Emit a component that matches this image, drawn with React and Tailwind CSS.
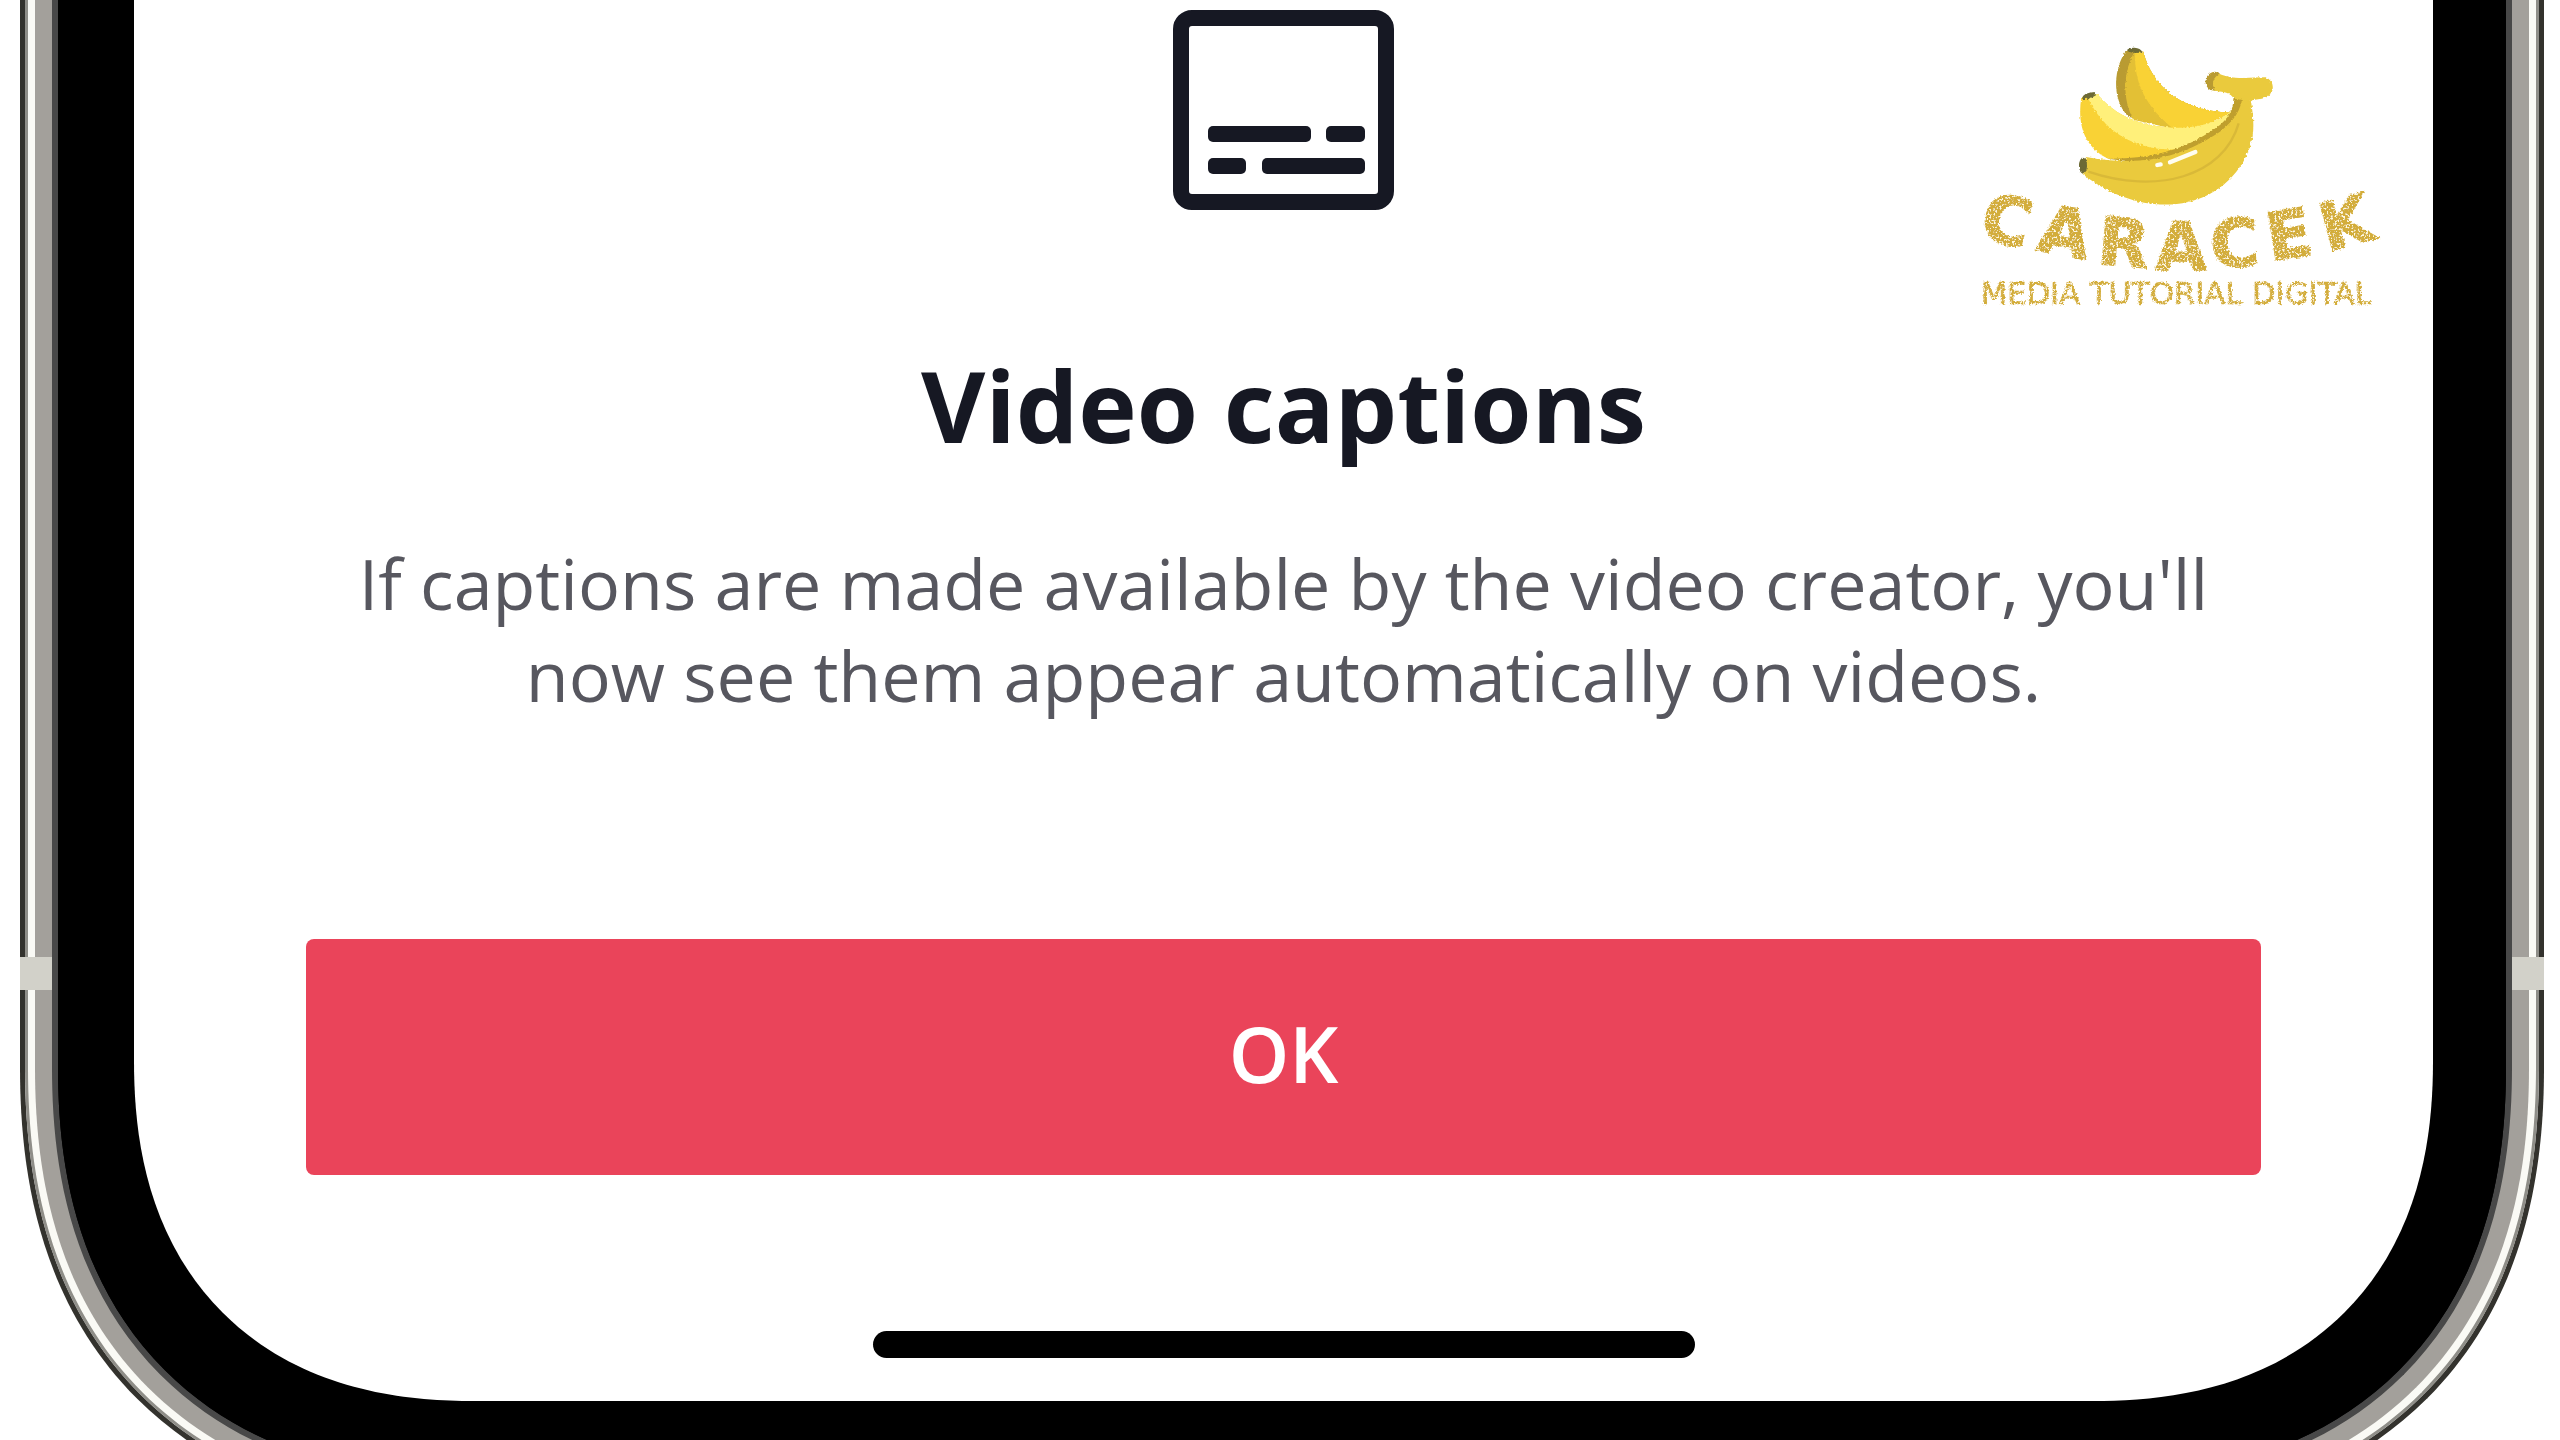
const GOLD = '#d3ad3a'

function CaptionsIcon() {
  return (
    <svg viewBox="0 0 221 200" className="h-[200px] w-[221px] shrink-0" fill="#161823" aria-hidden="true">
      <rect x="8" y="8" width="205" height="184" rx="11" fill="none" stroke="#161823" strokeWidth="16" />
      <rect x="35" y="116" width="103" height="16" rx="5" />
      <rect x="153" y="116" width="39" height="16" rx="5" />
      <rect x="35" y="148" width="38" height="16" rx="5" />
      <rect x="89" y="148" width="103" height="16" rx="5" />
    </svg>
  )
}

function BrandLogo() {
  return (
    <svg viewBox="0 0 1320 900" className="h-[300px] w-[440px]" role="img" aria-label="Caracek Media Tutorial Digital">
      <defs>
        {/* gold glitter for the lettering */}
        <filter id="glitter" x="-5%" y="-10%" width="110%" height="120%">
          <feTurbulence type="fractalNoise" baseFrequency="0.16" numOctaves="2" seed="4" result="noise" />
          <feDisplacementMap in="SourceGraphic" in2="noise" scale="14" xChannelSelector="R" yChannelSelector="G" result="rough" />
          <feColorMatrix in="noise" type="matrix" values="0 0 0 0 1  0 0 0 0 0.95  0 0 0 0 0.75  7 0 0 0 -3.8" result="specks" />
          <feComposite in="specks" in2="rough" operator="in" result="shine" />
          <feMerge>
            <feMergeNode in="rough" />
            <feMergeNode in="shine" />
          </feMerge>
        </filter>
        <filter id="fuzz" x="-5%" y="-5%" width="110%" height="110%">
          <feTurbulence type="fractalNoise" baseFrequency="0.16" numOctaves="1" seed="2" />
          <feDisplacementMap in="SourceGraphic" scale="10" xChannelSelector="R" yChannelSelector="G" />
        </filter>
      </defs>

      <g filter="url(#fuzz)">
        {/* back banana */}
        <path d="M500 90C462 140 452 235 505 290L640 325L720 320L812 278C650 272 575 190 550 95Z" fill="#b99b30" />
        <path d="M524 95C490 150 485 240 522 300L640 326L720 320L812 278C650 272 575 190 550 95Z" fill="#e3c036" />
        <path d="M526 95C520 190 560 262 640 326L720 322L812 278C650 272 575 190 550 95Z" fill="#f9d235" />
        <path d="M499 92Q506 82 524 83Q541 84 547 96Q524 103 499 92Z" fill="#6d6b36" />

        {/* middle banana */}
        <path d="M364 232C350 320 378 385 445 416C600 425 740 380 822 268C760 318 690 328 620 322C520 312 460 280 410 220Z" fill="#f9d235" />
        <path d="M385 236C430 330 520 395 660 388C730 365 790 330 822 268C760 318 690 328 620 322C520 312 460 280 410 220Z" fill="#fff07a" />
        <path d="M366 236Q368 218 404 216L408 226Q388 240 366 236Z" fill="#6d6b36" />

        {/* front banana and stem */}
        <path d="M440 416C600 418 700 375 780 315C815 285 820 260 820 235L850 235L845 300L700 410L560 430Z" fill="#bf9f2d" />
        <path d="M378 411C540 440 660 415 780 335C825 300 843 270 846 232L872 238C888 330 880 370 850 425C750 590 530 590 368 462Z" fill="#eaca3d" />
        <path d="M765 155C815 182 865 172 915 172C950 182 945 232 905 236C890 238 880 240 868 242L822 236C805 212 785 218 755 210C730 196 735 160 765 155Z" fill="#eaca3d" />
        <path d="M765 155C730 160 730 198 752 210L768 212C752 196 758 172 780 160Z" fill="#b99b30" />
        <ellipse cx="369" cy="437" rx="12" ry="24" fill="#6d6b36" />
      </g>
      <path d="M385 455C590 525 790 470 836 310" fill="none" stroke="#d9b938" strokeWidth="7" />
      <path d="M630 427L706 396M592 435L602 433" fill="none" stroke="#fffdf0" strokeWidth="13" strokeLinecap="round" />

      <g filter="url(#glitter)" fill={GOLD} stroke={GOLD} fontFamily="'DejaVu Sans', 'Open Sans', sans-serif">
        <text
          x="52 226 408 585 754 930 1100"
          y="652 690 731 749 744 724 696"
          rotate="14 11 5 0 -3 -9 -15"
          fontSize="200"
          fontWeight="700"
          strokeWidth="4"
        >
          CARACEK
        </text>
        <text x="62" y="853" fontSize="92" strokeWidth="2">MEDIA TUTORIAL DIGITAL</text>
      </g>
    </svg>
  )
}

// Lower half of the handset, one ring per layer of the metal edge
function PhoneFrame({ children }) {
  return (
    <div className="relative ml-5 mr-4">
      <div className="rounded-b-[448px] [corner-shape:superellipse(1.2)] border-x-[5px] border-b-[5px] border-[#33322d]">
        <div className="rounded-b-[443px] [corner-shape:superellipse(1.2)] border-x-[3px] border-b-[3px] border-[#8f8e88] bg-[#8f8e88]">
          <div className="rounded-b-[440px] [corner-shape:superellipse(1.2)] border-x-[7px] border-b-[7px] border-[#fafaf5] bg-[#fafaf5]">
            <div className="rounded-b-[433px] [corner-shape:superellipse(1.2)] border-x-[17px] border-b-[17px] border-[#a3a09b] bg-[#a3a09b]">
              <div className="rounded-b-[416px] [corner-shape:superellipse(1.2)] border-x-[6px] border-b-[6px] border-[#484848] bg-black">
                <div className="rounded-b-[410px] [corner-shape:superellipse(1.2)] bg-black pb-[76px] pl-[76px] pr-[73px]">
                  {children}
                </div>
              </div>
            </div>
          </div>
        </div>
      </div>
      {/* antenna bands */}
      <span className="absolute left-0 top-[957px] h-[33px] w-8 bg-[#d2d1c9]" />
      <span className="absolute right-0 top-[957px] h-[33px] w-8 bg-[#d2d1c9]" />
    </div>
  )
}

export default function App() {
  return (
    <main className="h-screen overflow-hidden bg-white font-['Open_Sans','Noto_Sans',sans-serif]">
      <PhoneFrame>
        <section className="relative flex flex-col items-center rounded-b-[340px] [corner-shape:superellipse(1.2)] bg-white px-[172px] pb-[43px] pt-[10px]">
          <CaptionsIcon />
          <h1 className="mt-[135px] text-[99px] leading-[120px] font-bold text-[#161823]">Video captions</h1>
          <p className="mt-[72px] text-center text-[70px] leading-[92px] text-[#57575f]">
            If captions are made available by the video creator, you'll
            <br />
            now see them appear automatically on videos.
          </p>
          <button
            type="button"
            className="mt-[218px] h-[236px] w-full rounded-lg bg-[#ea445a] pb-[6px] text-[77px] font-semibold text-white"
          >
            OK
          </button>
          <div className="mt-[156px] h-[27px] w-[822px] rounded-full bg-black" />
          <div className="absolute right-[33px] top-5">
            <BrandLogo />
          </div>
        </section>
      </PhoneFrame>
    </main>
  )
}
